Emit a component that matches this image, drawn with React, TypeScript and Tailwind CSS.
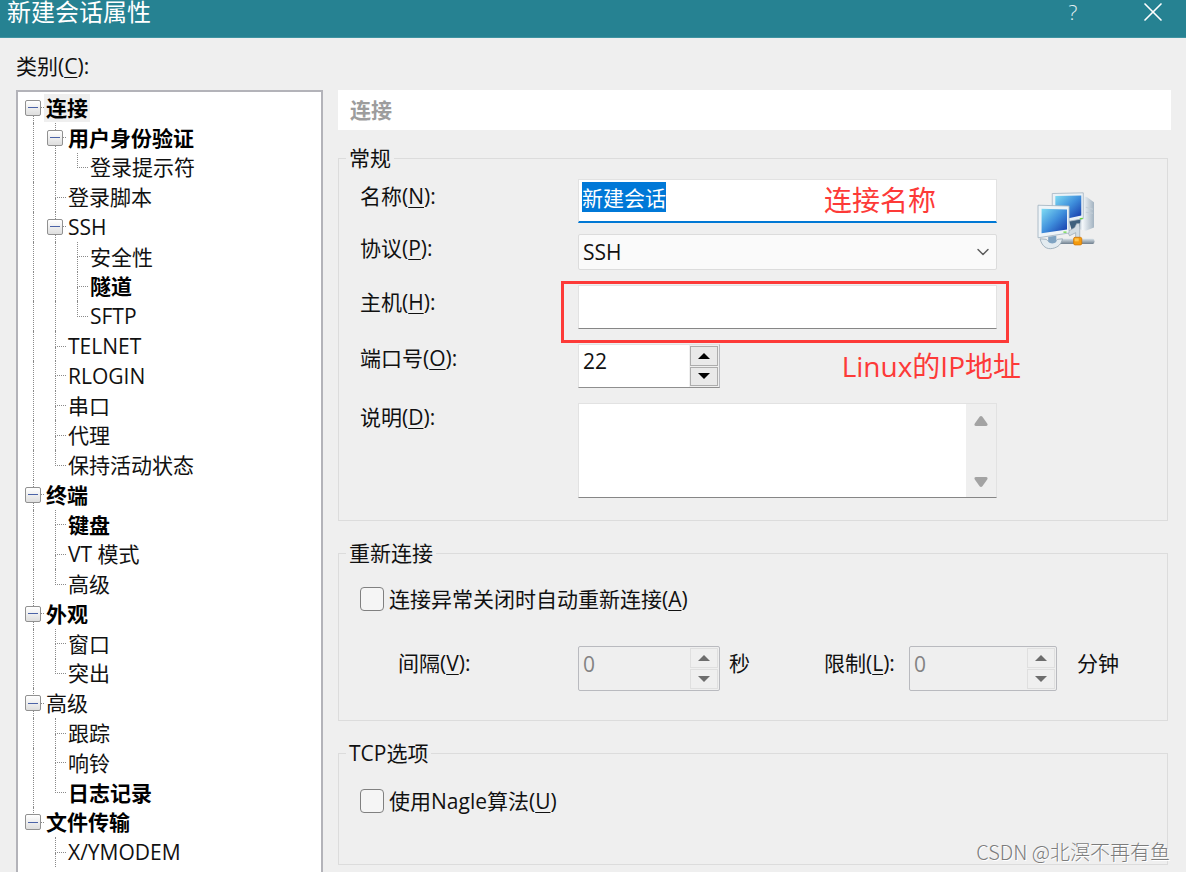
import { useEffect, useRef } from "react"
import type { ReactNode } from "react"
import clsx from "clsx"
import { ChevronDown, X } from "lucide-react"

type TreeNode = {
  label: string
  bold?: boolean
  /** more siblings follow below the fold */
  more?: boolean
  children?: TreeNode[]
}

const CATEGORIES: TreeNode[] = [
  {
    label: "连接",
    bold: true,
    children: [
      { label: "用户身份验证", bold: true, children: [{ label: "登录提示符" }] },
      { label: "登录脚本" },
      {
        label: "SSH",
        children: [
          { label: "安全性" },
          { label: "隧道", bold: true },
          { label: "SFTP" },
        ],
      },
      { label: "TELNET" },
      { label: "RLOGIN" },
      { label: "串口" },
      { label: "代理" },
      { label: "保持活动状态" },
    ],
  },
  {
    label: "终端",
    bold: true,
    children: [
      { label: "键盘", bold: true },
      { label: "VT 模式" },
      { label: "高级" },
    ],
  },
  {
    label: "外观",
    bold: true,
    children: [{ label: "窗口" }, { label: "突出" }],
  },
  {
    label: "高级",
    children: [
      { label: "跟踪" },
      { label: "响铃" },
      { label: "日志记录", bold: true },
    ],
  },
  {
    label: "文件传输",
    bold: true,
    children: [{ label: "X/YMODEM", more: true }],
  },
]

type TreeRow = {
  node: TreeNode
  first: boolean
  last: boolean
  /** one entry per ancestor: does its guide line run past this row */
  guides: boolean[]
}

function flatten(nodes: TreeNode[], guides: boolean[] = []): TreeRow[] {
  return nodes.flatMap((node, i) => {
    const last = i === nodes.length - 1 && !node.more
    const first = i === 0 && guides.length === 0
    return [
      { node, first, last, guides },
      ...flatten(node.children ?? [], [...guides, !last]),
    ]
  })
}

const ROWS = flatten(CATEGORIES)

export default function App() {
  return (
    <div className="relative flex min-h-screen flex-col overflow-hidden bg-[#efefef] font-['Open_Sans','Noto_Sans_CJK_SC',sans-serif] text-[21px] leading-[24px] text-[#111]">
      <TitleBar />
      <div className="flex flex-1 gap-[15px] px-[15px] pl-4">
        <CategoryTree />
        <main className="min-w-0 flex-1 pt-[52px]">
          <h2 className="bg-white px-3 py-2 font-bold text-[#9d9d9d]">连接</h2>
          <div className="mt-4 mr-[3px] flex flex-col gap-5">
            <GeneralGroup />
            <ReconnectGroup />
            <TcpGroup />
          </div>
        </main>
      </div>
      <p className="absolute right-4 bottom-2 font-['Noto_Sans_CJK_SC',sans-serif] text-[20px] font-light text-[#7c7c7c] [text-shadow:1px_1px_0_#fff]">
        CSDN @北溟不再有鱼
      </p>
    </div>
  )
}

function TitleBar() {
  return (
    <header className="flex h-[38px] items-start border-b border-[#3f93a1] bg-[#268292] pr-[18px] pl-[7px] text-white">
      <h1 className="flex-1 text-[24px] leading-[24px]">新建会话属性</h1>
      <button
        type="button"
        aria-label="帮助"
        className="mr-[55px] w-5 font-light text-[#e4f0f2]"
      >
        ?
      </button>
      <button
        type="button"
        aria-label="关闭"
        className="flex h-6 w-[30px] items-center justify-center"
      >
        <X className="size-[32px] shrink-0" strokeWidth={1.25} />
      </button>
    </header>
  )
}

function CategoryTree() {
  return (
    <aside className="flex w-[307px] flex-col pt-4">
      <h2 id="category-label">
        类别(<Key>C</Key>):
      </h2>
      <div className="mt-3 flex-1 border-2 border-b-0 border-[#b3b3b9] bg-white pt-px pl-1">
        <ul
          role="tree"
          aria-labelledby="category-label"
          className="grid h-[774px] auto-rows-fr"
        >
          {ROWS.map((row, i) => (
            <li
              key={i}
              role="treeitem"
              aria-level={row.guides.length + 1}
              aria-selected={i === 0}
              className="flex items-stretch"
            >
              {row.guides.map((on, g) => (
                <span key={g} className="w-[22px] pl-[11px]">
                  <span
                    className={clsx(
                      "block h-full",
                      on && "border-l border-dotted border-[#8a8a8a]",
                    )}
                  />
                </span>
              ))}
              <Branch row={row} />
              <span
                className={clsx(
                  "self-center px-[2px] leading-[28px]",
                  row.node.bold && "font-bold text-black",
                  i === 0 && "bg-[#efefef]",
                )}
              >
                {row.node.label}
              </span>
            </li>
          ))}
        </ul>
      </div>
    </aside>
  )
}

function Branch({ row }: { row: TreeRow }) {
  return (
    <span className="relative flex w-[22px] flex-col pl-[11px]">
      <span
        className={clsx(
          "flex-1 border-b border-dotted border-[#8a8a8a]",
          !row.first && "border-l",
        )}
      />
      <span
        className={clsx(
          "flex-1 border-dotted border-[#8a8a8a]",
          !row.last && "border-l",
        )}
      />
      {row.node.children ? (
        <button
          type="button"
          aria-label={`折叠 ${row.node.label}`}
          className="absolute inset-0 m-auto flex size-4 items-center justify-center rounded-[2px] border border-[#919191] bg-linear-to-b from-white to-[#dedede]"
        >
          <span className="h-px w-[10px] bg-[#4b63a7]" />
        </button>
      ) : null}
    </span>
  )
}

function GeneralGroup() {
  const nameRef = useRef<HTMLInputElement>(null)

  useEffect(() => {
    nameRef.current?.focus()
    nameRef.current?.select()
  }, [])

  return (
    <Group title="常规">
      <div className="flex pt-[9px] pr-[72px] pb-[22px] pl-[21px]">
        <div className="flex min-w-0 flex-1 flex-col gap-[15px]">
          <div className="-mb-1 flex">
            <FieldLabel htmlFor="name" text="名称" accessKey="N" tall />
            <div className="relative flex-1">
              <input
                ref={nameRef}
                id="name"
                defaultValue="新建会话"
                className="block h-[44px] w-full border border-b-2 border-[#e2e2e2] border-b-[#0078d4] bg-white px-[3px] pb-2 leading-[28px] outline-none selection:bg-[#0078d7] selection:text-white"
              />
              <Note className="top-[5px] right-[61px]">连接名称</Note>
            </div>
          </div>

          <div className="flex">
            <FieldLabel htmlFor="protocol" text="协议" accessKey="P" />
            <div className="relative flex-1">
              <select
                id="protocol"
                className="block h-[36px] w-full appearance-none rounded-[2px] border border-[#dcdcdc] bg-[#fafafa] px-1"
              >
                <option>SSH</option>
              </select>
              <ChevronDown
                className="pointer-events-none absolute top-2 right-1 size-5 text-[#5c5c5c]"
                strokeWidth={1.75}
              />
            </div>
          </div>

          <div className="flex">
            <FieldLabel htmlFor="host" text="主机" accessKey="H" tall />
            <div className="relative flex-1">
              <input
                id="host"
                className="block h-[44px] w-full border border-[#e2e2e2] border-b-[#868686] bg-white px-1"
              />
              <div className="pointer-events-none absolute -top-1 -right-3 -bottom-[14px] -left-[17px] border-3 border-[#fd3a38]" />
              <Note className="top-[65px] -right-6">Linux的IP地址</Note>
            </div>
          </div>

          <div className="flex">
            <FieldLabel htmlFor="port" text="端口号" accessKey="O" />
            <Spinner id="port" value="22" className="h-[44px] w-[142px]" />
          </div>

          <div className="flex">
            <FieldLabel htmlFor="description" text="说明" accessKey="D" />
            <div className="flex h-[95px] flex-1 border border-[#e2e2e2] border-b-[#868686]">
              <textarea
                id="description"
                className="min-w-0 flex-1 resize-none bg-white px-1 outline-none"
              />
              <div className="flex w-[30px] flex-col items-center justify-between pt-3 pb-[10px] text-[#a3a3a3]">
                <button type="button" aria-label="向上滚动">
                  <ScrollArrow />
                </button>
                <button type="button" aria-label="向下滚动">
                  <ScrollArrow down />
                </button>
              </div>
            </div>
          </div>
        </div>
        <NetworkIcon />
      </div>
    </Group>
  )
}

function ReconnectGroup() {
  return (
    <Group title="重新连接">
      <div className="pt-[22px] pb-[29px] pl-[21px]">
        <Check id="auto-reconnect">
          连接异常关闭时自动重新连接(<Key>A</Key>)
        </Check>
        <div className="mt-[35px] flex items-start pl-[38px]">
          <label htmlFor="interval" className="w-[180px] pt-[5px]">
            间隔(<Key>V</Key>):
          </label>
          <Spinner id="interval" value="0" disabled className="h-[45px] w-[142px]" />
          <span className="w-[104px] pt-[5px] pl-[9px]">秒</span>
          <label htmlFor="limit" className="w-[85px] pt-[5px]">
            限制(<Key>L</Key>):
          </label>
          <Spinner id="limit" value="0" disabled className="h-[45px] w-[148px]" />
          <span className="pt-[5px] pl-5">分钟</span>
        </div>
      </div>
    </Group>
  )
}

function TcpGroup() {
  return (
    <Group title="TCP选项">
      <div className="pt-6 pb-[51px] pl-[21px]">
        <Check id="nagle">
          使用Nagle算法(<Key>U</Key>)
        </Check>
      </div>
    </Group>
  )
}

function Group({ title, children }: { title: string; children: ReactNode }) {
  return (
    <fieldset className="min-w-0 border border-[#dcdcdc]">
      <legend className="ml-[7px] px-[3px]">{title}</legend>
      {children}
    </fieldset>
  )
}

/** Underlined accelerator letter. */
function Key({ children }: { children: ReactNode }) {
  return (
    <u className="decoration-1 underline-offset-[3px]">{children}</u>
  )
}

function FieldLabel({
  htmlFor,
  text,
  accessKey,
  tall,
}: {
  htmlFor: string
  text: string
  accessKey: string
  tall?: boolean
}) {
  return (
    <label
      htmlFor={htmlFor}
      className={clsx("w-[218px] shrink-0", tall ? "pt-[5px]" : "pt-[2px]")}
    >
      {text}(<Key>{accessKey}</Key>):
    </label>
  )
}

function Note({ className, children }: { className: string; children: ReactNode }) {
  return (
    <span
      className={clsx(
        "pointer-events-none absolute text-[28px] leading-[32px] whitespace-nowrap text-[#fd3a38]",
        className,
      )}
    >
      {children}
    </span>
  )
}

function Check({ id, children }: { id: string; children: ReactNode }) {
  return (
    <div className="flex items-center gap-[5px]">
      <input
        id={id}
        type="checkbox"
        className="size-6 appearance-none rounded-[4px] border border-[#808080] bg-[#f5f5f5]"
      />
      <label htmlFor={id}>{children}</label>
    </div>
  )
}

function Spinner({
  id,
  value,
  disabled,
  className,
}: {
  id: string
  value: string
  disabled?: boolean
  className: string
}) {
  const button = clsx(
    "flex flex-1 items-center justify-center border",
    disabled
      ? "border-[#dfdfdf] text-[#6d6d6d]"
      : "border-[#adadad] bg-[#e9e9e9] text-black",
  )
  return (
    <div
      className={clsx(
        "flex border",
        disabled
          ? "rounded-[2px] border-[#b9babf]"
          : "border-[#e2e2e2] border-r-[#b9babf] border-b-[#8f8f8f]",
        className,
      )}
    >
      <input
        id={id}
        inputMode="numeric"
        defaultValue={value}
        disabled={disabled}
        className={clsx(
          "min-w-0 flex-1 px-1 pb-[10px]",
          disabled ? "text-[#838383]" : "bg-white",
        )}
      />
      <div className="flex w-[30px] flex-col gap-px p-px">
        <button type="button" aria-label="增加" disabled={disabled} className={button}>
          <Triangle />
        </button>
        <button type="button" aria-label="减少" disabled={disabled} className={button}>
          <Triangle down />
        </button>
      </div>
    </div>
  )
}

function Triangle({ down }: { down?: boolean }) {
  return (
    <svg
      viewBox="0 0 12 6"
      fill="currentColor"
      className={clsx("h-[6px] w-3", down && "rotate-180")}
      aria-hidden="true"
    >
      <path d="M6 0L12 6H0z" />
    </svg>
  )
}

function ScrollArrow({ down }: { down?: boolean }) {
  return (
    <svg
      viewBox="0 0 14 10"
      fill="currentColor"
      className={clsx("block h-[10px] w-[14px]", down && "rotate-180")}
      aria-hidden="true"
    >
      <path d="M5.600.8q1.400-1.400 2.800 0l4.800 6.700q1.200 2.500-1.400 2.500H2.200Q-.4 10 .8 7.500z" />
    </svg>
  )
}

function NetworkIcon() {
  return (
    <svg
      viewBox="0 0 57 57"
      className="mt-[13px] ml-10 size-[58px] shrink-0"
      aria-hidden="true"
    >
      <defs>
        <linearGradient id="screen" x1="0" y1="0" x2="1" y2="1">
          <stop offset="0" stopColor="#7fdcf3" />
          <stop offset="0.5" stopColor="#3f8fdc" />
          <stop offset="1" stopColor="#1436a8" />
        </linearGradient>
        <linearGradient id="tower" x1="0" y1="0" x2="1" y2="0">
          <stop offset="0" stopColor="#a9bac8" />
          <stop offset="0.3" stopColor="#f3f7fa" />
          <stop offset="1" stopColor="#a3b3c1" />
        </linearGradient>
        <linearGradient id="pipe" x1="0" y1="0" x2="0" y2="1">
          <stop offset="0" stopColor="#d5dfe6" />
          <stop offset="1" stopColor="#71818f" />
        </linearGradient>
      </defs>
      {/* rear machine */}
      <path d="M43 4l6 1 7 5v25l-8 3-8-2z" fill="url(#tower)" />
      <path d="M48 15l7 2M48 20l7 1" stroke="#c3ced7" />
      <path d="M31 27l12-2-1 9-8 3z" fill="#3e607d" />
      <path d="M15 1.500L45.500 .8v25.400L30 29 15 25z" fill="#eaf1f6" stroke="#a5b5c3" strokeWidth="0.8" />
      <path d="M18 4l25.500-.6v19.800L30 26 18 22z" fill="url(#screen)" />
      {/* cable */}
      <path d="M24 46h31q1.500 0 1.500 2.500T55 51H22z" fill="url(#pipe)" />
      <path d="M30 39l7-4 2-4h3v14h-4v-5l-6 3z" fill="#d3dde4" stroke="#8a9cab" strokeWidth="0.6" />
      <rect x="36" y="44.500" width="8" height="7.500" rx="1.500" fill="#f49a0c" stroke="#d07808" strokeWidth="0.8" />
      <rect x="37" y="45.500" width="4" height="3" fill="#ffc44d" />
      {/* front machine */}
      <path d="M3 46c2 8 7 10.500 12 9.500 6-1 9-4.500 10-9.500l-5 .5c-1 3-9 3-11 0z" fill="#e3ebf0" stroke="#93a5b3" strokeWidth="0.8" />
      <path d="M11 44l8-1v6c-2 2-6 2-8 0z" fill="#7fa3c2" />
      <path d="M1 13l30.500.8v26.500L1 45z" fill="#eef4f8" stroke="#a0b1bf" strokeWidth="0.8" />
      <path d="M4.500 16.500l25 .7v19.600l-25 3.700z" fill="url(#screen)" />
      <path d="M26 39.500h3M42 26.500l3-.5" stroke="#68d83c" strokeWidth="1.200" />
    </svg>
  )
}
